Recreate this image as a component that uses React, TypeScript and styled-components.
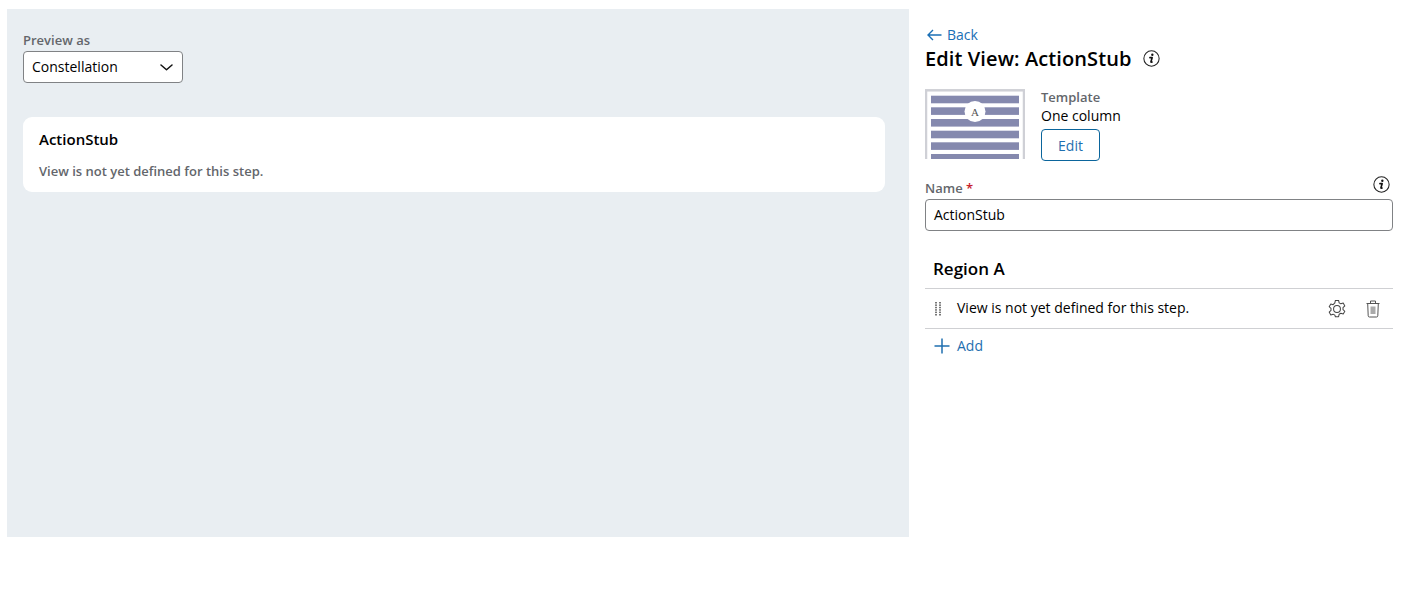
import React from "react";
import styled, { createGlobalStyle } from "styled-components";

const GlobalStyle = createGlobalStyle`
  body {
    margin: 0;
    background: #fff;
    font-family: "Open Sans", "Liberation Sans", sans-serif;
    color: #000;
  }
`;

const InfoIcon = ({ size }: { size: number }) => (
  <svg width={size} height={size} viewBox="0 0 18 18" fill="none">
    <circle cx="9" cy="9" r="8.1" stroke="#222" strokeWidth="1.1" />
    <circle cx="9.9" cy="5" r="1.25" fill="#111" />
    <path
      d="M7.3 8.1h2.4l-1.300 4.300c-.1.5.2.7 1.200.4"
      stroke="#111"
      strokeWidth="1.700"
      strokeLinecap="round"
      strokeLinejoin="round"
    />
  </svg>
);

const GearIcon = () => (
  <svg width="18" height="18" viewBox="0.6 0.6 16.800 16.800" fill="none" stroke="#444" strokeWidth="0.950" strokeLinejoin="round">
    <circle cx="9" cy="9" r="3.200" />
    <path d="M7.500 1h3l.5 2.300 1.600.9 2.200-.7 1.500 2.600-1.700 1.600v1.800l1.700 1.600-1.500 2.600-2.200-.7-1.600.9-.5 2.300h-3L7 14.700l-1.600-.9-2.200.7-1.500-2.600 1.700-1.600V8.500L1.700 6.900l1.500-2.600 2.200.7L7 3.300z" />
  </svg>
);

const TrashIcon = () => (
  <svg width="14" height="18" viewBox="0 0 14 18" fill="none" stroke="#555" strokeWidth="1">
    <path d="M0.500 3.500h13M4.500 3.500V1h5v2.500M1.700 3.500l.5 12.300c0 .8.500 1.200 1.200 1.200h7.200c.7 0 1.200-.4 1.200-1.200l.5-12.300" />
    <rect x="4.500" y="6.500" width="5" height="7.500" fill="#aaa" stroke="none" />
  </svg>
);

const ChevronIcon = () => (
  <svg width="13" height="7" viewBox="0 0 13 7" fill="none">
    <path d="M1 1 6.500 5.800 12 1" stroke="#111" strokeWidth="1.500" strokeLinecap="round" strokeLinejoin="round" />
  </svg>
);

const BackArrow = () => (
  <svg width="15" height="12" viewBox="0 0 15 12" fill="none">
    <path d="M14.500 6H1.200M6 1 1 6l5 5" stroke="#1a6fb5" strokeWidth="1.400" />
  </svg>
);

const PlusIcon = () => (
  <svg width="16" height="16" viewBox="0 0 16 16" fill="none">
    <path d="M8 0.500v15M0.500 8h15" stroke="#1f6fb0" strokeWidth="1.500" />
  </svg>
);

const DragHandle = () => (
  <svg width="6" height="14" viewBox="0 0 6 14">
    {[0, 1, 2, 3, 4, 5].map(i => (
      <g key={i} fill="#777">
        <rect x="0" y={i * 2.4} width="2" height="1.500" />
        <rect x="4" y={i * 2.4} width="2" height="1.500" />
      </g>
    ))}
  </svg>
);

const TemplateThumb = () => (
  <ThumbSvg width="100" height="70" viewBox="0 0 100 70">
    <rect x="1" y="1.300" width="98" height="72" fill="#fff" stroke="#cfd0d6" strokeWidth="2.500" />
    {[6.700, 18.300, 30, 41.700, 53.300, 65].map(y => (
      <rect key={y} x="6" y={y} width="88" height="7.600" fill="#8589ae" />
    ))}
    <circle cx="50" cy="22.500" r="10.500" fill="#fff" />
    <text x="50" y="26.500" textAnchor="middle" fontSize="11" fontFamily="Liberation Serif, serif" fill="#555">
      A
    </text>
  </ThumbSvg>
);

export default function App() {
  return (
    <>
      <GlobalStyle />
      <Page>
        <PreviewPanel>
          <FieldLabel>Preview as</FieldLabel>
          <SelectBox>
            <span>Constellation</span>
            <ChevronIcon />
          </SelectBox>
          <Card>
            <CardTitle>ActionStub</CardTitle>
            <CardText>View is not yet defined for this step.</CardText>
          </Card>
        </PreviewPanel>

        <SidePanel>
          <BackLink>
            <BackArrow />
            Back
          </BackLink>
          <TitleRow>
            <Title>Edit View: ActionStub</Title>
            <InfoIcon size={17} />
          </TitleRow>

          <TemplateRow>
            <TemplateThumb />
            <TemplateInfo>
              <FieldLabel>Template</FieldLabel>
              <TemplateName>One column</TemplateName>
              <EditButton>Edit</EditButton>
            </TemplateInfo>
          </TemplateRow>

          <NameHeader>
            <FieldLabel>
              Name <Required>*</Required>
            </FieldLabel>
            <NameInfo>
              <InfoIcon size={17} />
            </NameInfo>
          </NameHeader>
          <TextField>ActionStub</TextField>

          <RegionTitle>Region A</RegionTitle>
          <RegionRow>
            <DragHandle />
            <RowText>View is not yet defined for this step.</RowText>
            <RowActions>
              <GearIcon />
              <TrashIcon />
            </RowActions>
          </RegionRow>
          <AddLink>
            <PlusIcon />
            Add
          </AddLink>
        </SidePanel>
      </Page>
    </>
  );
}

const Page = styled.div`
  display: flex;
  padding: 9px 24px 0 7px;
  height: 587px;
  box-sizing: border-box;
`;

const PreviewPanel = styled.div`
  width: 902px;
  height: 528px;
  flex-shrink: 0;
  box-sizing: border-box;
  padding: 22px 24px 0 16px;
  background: #e9eef2;
`;

const FieldLabel = styled.div`
  font-size: 13px;
  line-height: 18px;
  font-weight: 600;
  color: #63666b;
`;

const SelectBox = styled.div`
  display: flex;
  align-items: center;
  justify-content: space-between;
  box-sizing: border-box;
  width: 160px;
  height: 32px;
  margin-top: 2px;
  padding: 0 9px 2px 8px;
  background: #fff;
  border: 1px solid #808285;
  border-radius: 4px;
  font-size: 14px;
  svg {
    margin-top: 2px;
  }
`;

const Card = styled.div`
  margin-top: 34px;
  height: 75px;
  box-sizing: border-box;
  padding: 12px 16px 0;
  background: #fff;
  border-radius: 9px;
`;

const CardTitle = styled.div`
  font-size: 15px;
  line-height: 20px;
  font-weight: 600;
`;

const CardText = styled.div`
  margin-top: 13px;
  font-size: 13px;
  line-height: 18px;
  font-weight: 600;
  color: #63666b;
`;

const SidePanel = styled.div`
  flex: 1;
  padding: 16px 0 0 16px;
`;

const BackLink = styled.div`
  display: flex;
  align-items: center;
  gap: 5px;
  padding-left: 2px;
  font-size: 14px;
  line-height: 19px;
  color: #1a6fb5;
`;

const TitleRow = styled.div`
  display: flex;
  align-items: center;
  gap: 11px;
  margin-top: 1px;
`;

const Title = styled.h1`
  margin: 0;
  font-size: 20px;
  line-height: 27px;
  font-weight: 600;
  letter-spacing: 0.1px;
`;

const TemplateRow = styled.div`
  display: flex;
  align-items: flex-start;
  gap: 16px;
  margin-top: 16px;
`;

const ThumbSvg = styled.svg`
  display: block;
  margin-top: 1px;
`;

const TemplateInfo = styled.div`
  display: flex;
  flex-direction: column;
  align-items: flex-start;
`;

const TemplateName = styled.div`
  font-size: 14px;
  line-height: 19px;
`;

const EditButton = styled.div`
  display: flex;
  align-items: center;
  justify-content: center;
  box-sizing: border-box;
  width: 59px;
  height: 32px;
  margin-top: 4px;
  border: 1px solid #0b659c;
  border-radius: 4px;
  font-size: 14px;
  color: #1f6fb0;
`;

const NameHeader = styled.div`
  display: flex;
  align-items: flex-start;
  justify-content: space-between;
  margin-top: 18px;
  height: 20px;
`;

const NameInfo = styled.div`
  display: flex;
  margin-top: -3px;
  padding-right: 3px;
`;

const Required = styled.span`
  color: #c8202c;
`;

const TextField = styled.div`
  box-sizing: border-box;
  height: 32px;
  padding: 0 8px 2px;
  display: flex;
  align-items: center;
  border: 1px solid #808285;
  border-radius: 4px;
  font-size: 14px;
`;

const RegionTitle = styled.div`
  margin-top: 26px;
  padding: 0 8px 8px;
  font-size: 17px;
  line-height: 23px;
  font-weight: 600;
  border-bottom: 1px solid #cfd0d3;
`;

const RegionRow = styled.div`
  display: flex;
  align-items: center;
  height: 39px;
  padding: 0 13px 0 10px;
  border-bottom: 1px solid #cfd0d3;
`;

const RowText = styled.div`
  flex: 1;
  margin-left: 16px;
  padding-bottom: 2px;
  font-size: 14px;
`;

const RowActions = styled.div`
  display: flex;
  align-items: center;
  gap: 20px;
`;

const AddLink = styled.div`
  display: flex;
  align-items: center;
  gap: 7px;
  margin-top: 7px;
  padding-left: 9px;
  font-size: 14px;
  line-height: 19px;
  color: #1f6fb0;
`;
